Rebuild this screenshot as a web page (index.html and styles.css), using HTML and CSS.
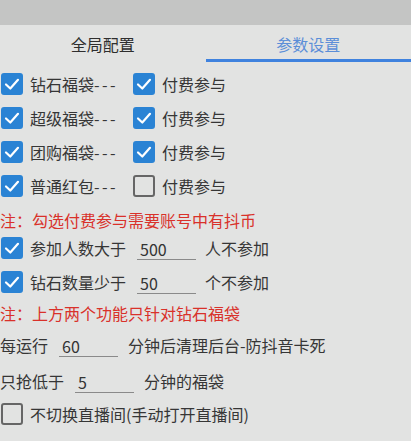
FILE: index.html
```html
<!DOCTYPE html>
<html lang="zh-CN">
<head>
  <meta charset="UTF-8">
  <meta name="viewport" content="width=device-width, initial-scale=1.0">
  <title>参数设置</title>
  <link rel="stylesheet" href="styles.css">
</head>
<body>
  <div class="topbar"></div>

  <div class="tabs">
    <div class="tab">全局配置</div>
    <div class="tab active">参数设置</div>
  </div>

  <div class="content">
    <div class="row">
      <span class="cb checked"><svg viewBox="0 0 22 22"><polyline points="5,11.5 9.3,15.5 17,6.8"/></svg></span>
      <span class="label">钻石福袋<span class="dash">---</span></span>
      <span class="cb checked"><svg viewBox="0 0 22 22"><polyline points="5,11.5 9.3,15.5 17,6.8"/></svg></span>
      <span>付费参与</span>
    </div>
    <div class="row">
      <span class="cb checked"><svg viewBox="0 0 22 22"><polyline points="5,11.5 9.3,15.5 17,6.8"/></svg></span>
      <span class="label">超级福袋<span class="dash">---</span></span>
      <span class="cb checked"><svg viewBox="0 0 22 22"><polyline points="5,11.5 9.3,15.5 17,6.8"/></svg></span>
      <span>付费参与</span>
    </div>
    <div class="row">
      <span class="cb checked"><svg viewBox="0 0 22 22"><polyline points="5,11.5 9.3,15.5 17,6.8"/></svg></span>
      <span class="label">团购福袋<span class="dash">---</span></span>
      <span class="cb checked"><svg viewBox="0 0 22 22"><polyline points="5,11.5 9.3,15.5 17,6.8"/></svg></span>
      <span>付费参与</span>
    </div>
    <div class="row">
      <span class="cb checked"><svg viewBox="0 0 22 22"><polyline points="5,11.5 9.3,15.5 17,6.8"/></svg></span>
      <span class="label">普通红包<span class="dash">---</span></span>
      <span class="cb"></span>
      <span>付费参与</span>
    </div>

    <div class="note note-top">注：勾选付费参与需要账号中有抖币</div>

    <div class="row">
      <span class="cb checked"><svg viewBox="0 0 22 22"><polyline points="5,11.5 9.3,15.5 17,6.8"/></svg></span>
      <span>参加人数大于</span>
      <span class="input">500</span>
      <span>人不参加</span>
    </div>
    <div class="row">
      <span class="cb checked"><svg viewBox="0 0 22 22"><polyline points="5,11.5 9.3,15.5 17,6.8"/></svg></span>
      <span>钻石数量少于</span>
      <span class="input">50</span>
      <span>个不参加</span>
    </div>

    <div class="note">注：上方两个功能只针对钻石福袋</div>

    <div class="row field-row">
      <span>每运行</span>
      <span class="input">60</span>
      <span>分钟后清理后台-防抖音卡死</span>
    </div>
    <div class="row field-row">
      <span>只抢低于</span>
      <span class="input">5</span>
      <span>分钟的福袋</span>
    </div>
    <div class="row last-row">
      <span class="cb"></span>
      <span>不切换直播间(手动打开直播间)</span>
    </div>
  </div>
</body>
</html>
```

FILE: styles.css
```css
* {
  margin: 0;
  padding: 0;
  box-sizing: border-box;
}
body {
  background: #e2e3e2;
  color: #363636;
  font-family: 'Noto Sans CJK SC', 'Noto Sans', sans-serif;
  font-size: 16px;
  width: 411px;
  height: 441px;
  overflow: hidden;
}
.topbar {
  height: 25px;
  background: #c4c5c4;
}
.tabs {
  display: flex;
  height: 37px;
}
.tab {
  flex: 1;
  text-align: center;
  padding-top: 7px;
  font-size: 16px;
  line-height: 25px;
  color: #2e2e2e;
  border-bottom: 3px solid transparent;
}
.tab.active {
  color: #5b8ed8;
  border-bottom-color: #3f82de;
}
.content {
  padding-top: 5px;
}
.row {
  display: flex;
  align-items: center;
  height: 34px;
  white-space: nowrap;
}
.cb {
  width: 22px;
  height: 22px;
  margin-left: 1px;
  margin-right: 7px;
  border-radius: 3px;
  border: 2px solid #666;
  flex-shrink: 0;
}
.cb.checked {
  background: #2a83d4;
  border-color: #2a83d4;
}
.cb svg {
  display: block;
  width: 22px;
  height: 22px;
  margin: -2px;
}
.cb polyline {
  fill: none;
  stroke: #fff;
  stroke-width: 2.2;
  stroke-linecap: round;
  stroke-linejoin: round;
}
.label {
  width: 96px;
  margin-right: 7px;
}
.dash {
  letter-spacing: 2.5px;
}
.label + .cb {
  margin-left: 0;
}
.note {
  height: 28px;
  line-height: 22px;
  color: #d9312a;
  display: flex;
  align-items: center;
}
.note-top {
  padding-top: 6px;
}
.input {
  width: 59px;
  height: 22px;
  line-height: 22px;
  margin: 2px 9px 0 11px;
  padding-left: 3px;
  border-bottom: 1px solid #8a8a8a;
  color: #333;
}
.field-row {
  height: 36px;
}
.field-row .input {
  margin-right: 10px;
}
.last-row {
  height: 30px;
}
```
